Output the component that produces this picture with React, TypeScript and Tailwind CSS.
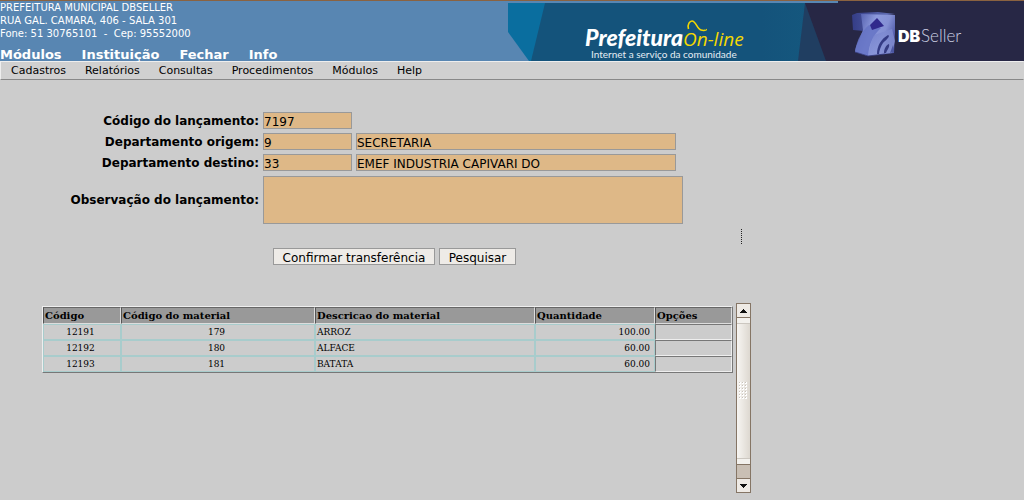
import React from "react";

const modules = ["Módulos", "Instituição", "Fechar", "Info"];
const menuItems = ["Cadastros", "Relatórios", "Consultas", "Procedimentos", "Módulos", "Help"];
const items = [
  { id: "12191", code: "179", name: "ARROZ", qty: "100.00" },
  { id: "12192", code: "180", name: "ALFACE", qty: "60.00" },
  { id: "12193", code: "181", name: "BATATA", qty: "60.00" },
];

const fieldClass =
  "h-[17px] border border-[#999] bg-[#deb887] pt-[2px] text-[12px] leading-[13px] text-black outline-none";
const labelClass = "pt-px text-right text-[12px] leading-4 font-bold whitespace-nowrap";
const headClass =
  "h-[17px] border border-t-[#666] border-l-[#555] border-r-[#ddd] border-b-[#ddd] bg-[#999] px-px text-left text-[10px] leading-[15px] font-bold";
const cellClass = "h-4 border border-[#a8cccc] pl-px text-[9px] leading-[14px]";
const optionClass = "h-4 border border-t-[#777] border-l-[#777] border-r-[#eee] border-b-[#eee] p-0";

function Banner() {
  return (
    <svg className="h-[60px] w-[516px] shrink-0" viewBox="0 0 516 60" role="img" aria-label="Prefeitura On-line, DBSeller">
      <defs>
        <linearGradient id="sea" x1="0" x2="1">
          <stop offset="0.75" stopColor="#14537b" />
          <stop offset="1" stopColor="#155a80" />
        </linearGradient>
        <linearGradient id="cube" x1="0" y1="0.1" x2="1" y2="0.5">
          <stop offset="0" stopColor="#4a56a6" />
          <stop offset="0.45" stopColor="#8c99dc" />
          <stop offset="0.75" stopColor="#8490d4" />
          <stop offset="1" stopColor="#4f59a8" />
        </linearGradient>
        <linearGradient id="cubeLight" x1="0" y1="0" x2="1" y2="1">
          <stop offset="0" stopColor="#6774c4" />
          <stop offset="1" stopColor="#a4b0e8" />
        </linearGradient>
        <linearGradient id="cubeSide" x1="0" x2="1">
          <stop offset="0" stopColor="#343d86" />
          <stop offset="1" stopColor="#6774bb" />
        </linearGradient>
      </defs>
      <path d="M0 2H40V60H21L0 31Z" fill="#0a6e9f" />
      <path d="M37 2H330V60H23Z" fill="url(#sea)" />
      <path d="M297 2H330V60H290Z" fill="#203e61" />
      <path d="M297 2V0H516V60H318Z" fill="#272745" />
      <rect x="297" y="0" width="33" height="2" fill="#5886b2" />
      <g>
        <text x="77" y="45" fill="#fff" fontFamily="Lato, sans-serif" fontSize="23" fontWeight="900" fontStyle="italic">
          Prefeitura
        </text>
        <text x="175" y="45" fill="#f5d800" fontFamily='"Open Sans", sans-serif' fontSize="19" fontStyle="italic">
          On-line
        </text>
        <path d="M180.5 28C179 23 182 20 184 20C188 20 189 28 193 29C196 30 199 29 198 28.500" fill="none" stroke="#f5d800" strokeWidth="1.6" />
        <text x="83" y="57" fill="#e5eef4" fontFamily="Lato, sans-serif" fontSize="10">
          Internet a serviço da comunidade
        </text>
      </g>
      <g>
        <path d="M344 14L349 12L370 11L387 13L356 17V30L345 29Z" fill="url(#cubeSide)" />
        <path d="M353 13L387 14L387 32L386 52L377 53L360 55L347 51C348 43 351 41 353 34L355 29Z" fill="url(#cube)" />
        <path d="M347 51C349 38 354 30 361 24L373 27C365 34 361 43 360 55Z" fill="#6573c4" opacity="0.85" />
        <path d="M366 34L384 28L387 40L384 52L361 54C362 44 364 39 366 34Z" fill="url(#cubeLight)" opacity="0.65" />
        <path d="M369 17L376 25L370 27L364 29L362 24Z" fill="#30298c" />
        <path d="M369 53C369 45 373 38 380 34C383 35 378 39 375 42C373 45 371 50 371 53Z" fill="#343b84" />
        <path d="M376 52C376 48 378 44 381 43C382 46 379 49 378 52Z" fill="#353c82" />
        <path d="M385 44L386 51L382 52Z" fill="#4c57a1" />
        <path d="M347 51L360 55L377 53" fill="none" stroke="#333878" strokeWidth="0.8" />
      </g>
      <text x="390" y="41" fill="#fff" fontFamily="Inter, sans-serif" fontSize="16" fontWeight="900">
        DB
      </text>
      <text x="413" y="41" fill="#ccd0e2" fontFamily="Lato, sans-serif" fontSize="17" fontWeight="300">
        Seller
      </text>
    </svg>
  );
}

function ScrollArrow({ up }: { up?: boolean }) {
  return (
    <button
      type="button"
      aria-label={up ? "Rolar para cima" : "Rolar para baixo"}
      className="flex h-[15px] w-full shrink-0 items-center justify-center border border-[#857565] bg-[#eeeae5]"
    >
      <svg className="h-1 w-[7px]" viewBox="0 0 7 4" shapeRendering="crispEdges">
        <path d={up ? "M3 0h1v1h1v1h1v1h1v1H0V3h1V2h1V1h1Z" : "M0 0h7v1H6v1H5v1H4v1H3V3H2V2H1V1H0Z"} fill="#111" />
      </svg>
    </button>
  );
}

function Scrollbar() {
  return (
    <div className="flex h-[190px] w-[15px] shrink-0 flex-col">
      <ScrollArrow up />
      <div className="flex grow flex-col border-x border-[#857565] bg-[#c9bfb4]">
        <div className="flex h-[147px] flex-col justify-between border-b border-[#857565] bg-linear-to-r from-[#f7f5f2] to-[#ddd8d0]">
          <div className="h-[6px] border-b border-[#ccc7c0] bg-[#f3f1ed]" />
          <svg className="h-[18px] w-[9px] self-center" viewBox="0 0 9 18" shapeRendering="crispEdges">
            {[0, 3, 6, 9, 12, 15].map((y) =>
              [0, 3, 6].map((x) => (
                <g key={`${x}-${y}`}>
                  <rect x={x} y={y} width="2" height="2" fill="#fff" />
                  <rect x={x} y={y} width="1" height="1" fill="#c8c2ba" />
                </g>
              ))
            )}
          </svg>
          <div className="h-[6px] border-t border-[#ccc7c0] bg-[#f3f1ed]" />
        </div>
      </div>
      <ScrollArrow />
    </div>
  );
}

export default function App() {
  return (
    <div className='min-h-screen bg-[#ccc] font-["DejaVu_Sans",sans-serif] text-black'>
      <header className="flex justify-between border-t border-[#8a6240] bg-[#5886b2] text-white">
        <div className="flex h-[60px] flex-col justify-between">
          <address className="text-[10px] leading-[13px] whitespace-pre not-italic">
            PREFEITURA MUNICIPAL DBSELLER
            <br />
            RUA GAL. CAMARA, 406 - SALA 301
            <br />
            {"Fone: 51 30765101  -  Cep: 95552000"}
          </address>
          <nav className="flex gap-5 text-[13px] leading-3 font-bold">
            {modules.map((m) => (
              <a key={m} href="#">
                {m}
              </a>
            ))}
          </nav>
        </div>
        <Banner />
      </header>

      <nav className="flex h-[19px] gap-[19px] border border-t-[#eee] border-r-[#d0d0d0] border-b-[#888] border-l-[#eee] bg-[#d0d0d0] pl-[10px] text-[11px] leading-[17px]">
        {menuItems.map((m) => (
          <a key={m} href="#">
            {m}
          </a>
        ))}
      </nav>

      <main className="pl-[42px]">
        <form className="pt-8" onSubmit={(e) => e.preventDefault()}>
          <div className="grid grid-cols-[217px_1fr] items-center gap-x-1 gap-y-1">
            <label htmlFor="codigo" className={labelClass}>
              Código do lançamento:
            </label>
            <div className="flex">
              <input id="codigo" readOnly defaultValue="7197" className={`${fieldClass} w-[89px]`} />
            </div>
            <label htmlFor="origem" className={labelClass}>
              Departamento origem:
            </label>
            <div className="flex gap-1">
              <input id="origem" readOnly defaultValue="9" className={`${fieldClass} w-[89px]`} />
              <input aria-label="Nome do departamento origem" readOnly defaultValue="SECRETARIA" className={`${fieldClass} w-80`} />
            </div>
            <label htmlFor="destino" className={labelClass}>
              Departamento destino:
            </label>
            <div className="flex gap-1">
              <input id="destino" readOnly defaultValue="33" className={`${fieldClass} w-[89px]`} />
              <input
                aria-label="Nome do departamento destino"
                readOnly
                defaultValue="EMEF INDUSTRIA CAPIVARI DO"
                className={`${fieldClass} w-80`}
              />
            </div>
            <label htmlFor="observacao" className={labelClass}>
              Observação do lançamento:
            </label>
            <textarea
              id="observacao"
              readOnly
              className="mt-px block h-12 w-[420px] resize-none border border-[#999] bg-[#deb887] text-[12px] outline-none"
            />
          </div>
          <div className="flex pt-[5px] pl-[699px]">
            <div className="h-[15px] border-l border-dotted border-[#222]" />
          </div>
          <div className="flex gap-1 pt-1 pl-[231px]">
            <button type="submit" className="h-[17px] w-[162px] border border-[#999] bg-[#eeebe7] pt-px text-[12px] leading-4 whitespace-nowrap">
              Confirmar transferência
            </button>
            <button type="button" className="h-[17px] w-[77px] border border-[#999] bg-[#eeebe7] pt-px text-[12px] leading-4">
              Pesquisar
            </button>
          </div>
        </form>

        <section className="flex items-start gap-[3px] pt-[38px]">
          <div className="pt-[3px]">
            <table className='w-[691px] table-fixed border-separate border-spacing-0 border border-t-[#eee] border-r-[#777] border-b-[#777] border-l-[#eee] font-["DejaVu_Serif",serif]'>
              <colgroup>
                <col className="w-[78px]" />
                <col className="w-[194px]" />
                <col className="w-[220px]" />
                <col className="w-[120px]" />
                <col className="w-[77px]" />
              </colgroup>
              <thead>
                <tr>
                  <th className={headClass}>Código</th>
                  <th className={headClass}>Código do material</th>
                  <th className={headClass}>Descricao do material</th>
                  <th className={headClass}>Quantidade</th>
                  <th className={headClass}>Opções</th>
                </tr>
              </thead>
              <tbody>
                {items.map((item) => (
                  <tr key={item.id}>
                    <td className={`${cellClass} pr-1 text-center`}>{item.id}</td>
                    <td className={`${cellClass} pr-1 text-center`}>{item.code}</td>
                    <td className={cellClass}>{item.name}</td>
                    <td className={`${cellClass} pr-1 text-right`}>{item.qty}</td>
                    <td className={optionClass} />
                  </tr>
                ))}
              </tbody>
            </table>
          </div>
          <Scrollbar />
        </section>
      </main>
    </div>
  );
}
